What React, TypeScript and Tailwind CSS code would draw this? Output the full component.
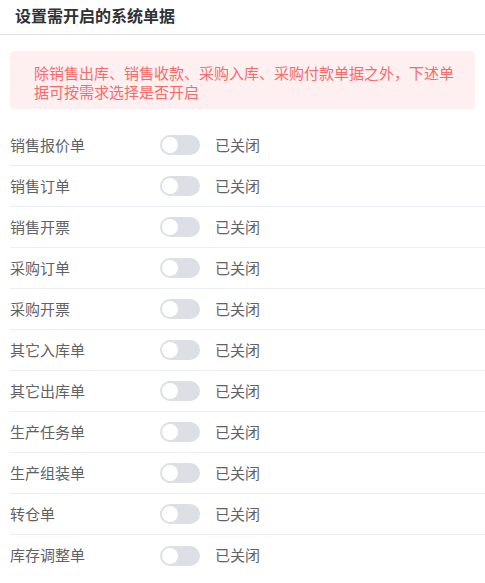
import { useState } from 'react'

const BILLS = [
  '销售报价单',
  '销售订单',
  '销售开票',
  '采购订单',
  '采购开票',
  '其它入库单',
  '其它出库单',
  '生产任务单',
  '生产组装单',
  '转仓单',
  '库存调整单',
]

function Toggle({ on, onChange }: { on: boolean; onChange: () => void }) {
  return (
    <button
      onClick={onChange}
      className={`relative w-[40px] h-[20px] rounded-full transition-colors ${
        on ? 'bg-[#409eff]' : 'bg-[#dcdfe6]'
      }`}
    >
      <span
        className={`absolute top-[2px] w-[16px] h-[16px] rounded-full bg-white transition-all ${
          on ? 'left-[22px]' : 'left-[2px]'
        }`}
      />
    </button>
  )
}

export default function App() {
  const [enabled, setEnabled] = useState<Record<string, boolean>>({})

  return (
    <div
      className="w-[485px] h-[583px] bg-white overflow-hidden"
      style={{ fontFamily: '"Noto Sans CJK SC", "Noto Sans", sans-serif' }}
    >
      {/* header */}
      <div className="pt-[4px] pb-[8px] px-[15px] border-b border-[#dcdfe6]">
        <h1 className="text-[16px] leading-[22px] font-bold text-[#303133]">设置需开启的系统单据</h1>
      </div>

      {/* tip */}
      <div className="mt-[16px] mx-[10px] rounded-[4px] bg-[#fef0f0] pt-[12px] pb-[8px] pl-[24px] pr-[12px] text-[15px] leading-[19px] text-[#f56c6c]">
        除销售出库、销售收款、采购入库、采购付款单据之外，下述单据可按需求选择是否开启
      </div>

      {/* bill list */}
      <div className="mt-[16px] ml-[10px]">
        {BILLS.map((name, i) => {
          const on = !!enabled[name]
          return (
            <div
              key={name}
              className={`flex items-center h-[41px] ${
                i < BILLS.length - 1 ? 'border-b border-[#ebeef5]' : ''
              }`}
            >
              <span className="w-[150px] text-[15px] text-[#606266]">{name}</span>
              <Toggle on={on} onChange={() => setEnabled({ ...enabled, [name]: !on })} />
              <span className="ml-[15px] text-[15px] text-[#606266]">{on ? '已开启' : '已关闭'}</span>
            </div>
          )
        })}
      </div>
    </div>
  )
}
